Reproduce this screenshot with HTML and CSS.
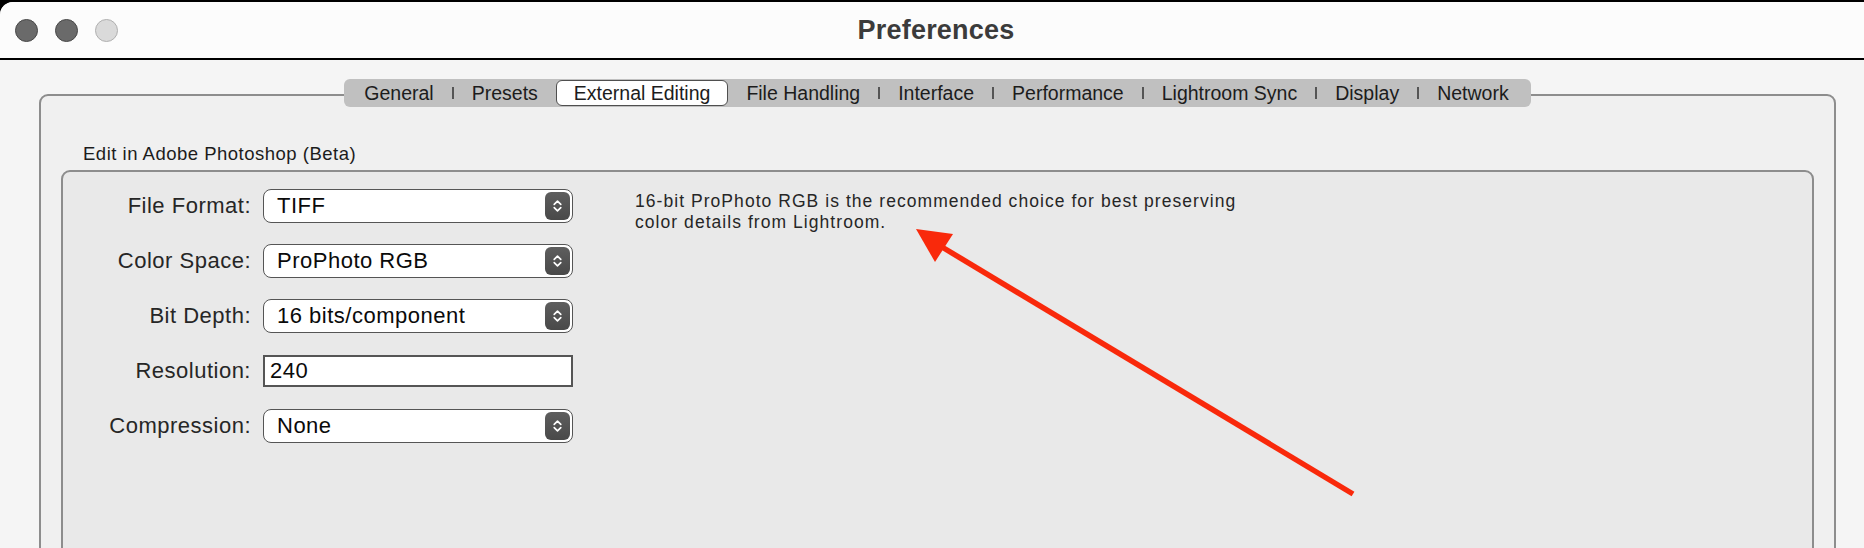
FILE: index.html
```html
<!DOCTYPE html>
<html>
<head>
<meta charset="utf-8">
<title>Preferences</title>
<link rel="stylesheet" href="styles.css">
</head>
<body>
<div class="window">
  <div class="titlebar">
    <div class="lights">
      <span class="light dark"></span>
      <span class="light dark"></span>
      <span class="light off"></span>
    </div>
    <div class="title">Preferences</div>
    <div class="spacer"></div>
  </div>
  <div class="content">
    <div class="panel">
      <div class="tabs">
        <span class="tab">General</span><span class="sep"></span>
        <span class="tab">Presets</span>
        <span class="tab active">External Editing</span>
        <span class="tab">File Handling</span><span class="sep"></span>
        <span class="tab">Interface</span><span class="sep"></span>
        <span class="tab">Performance</span><span class="sep"></span>
        <span class="tab">Lightroom Sync</span><span class="sep"></span>
        <span class="tab">Display</span><span class="sep"></span>
        <span class="tab">Network</span>
      </div>
      <div class="group-label">Edit in Adobe Photoshop (Beta)</div>
      <div class="group">
        <div class="form">
          <label class="lbl">File Format:</label>
          <div class="select"><span class="val">TIFF</span><span class="stepper"><svg viewBox="0 0 10 14" width="11" height="16"><path d="M2 5.5 L5 2.5 L8 5.5 M2 8.5 L5 11.5 L8 8.5" fill="none" stroke="#fff" stroke-width="1.5" stroke-linecap="round" stroke-linejoin="round"/></svg></span></div>
          <label class="lbl">Color Space:</label>
          <div class="select"><span class="val">ProPhoto RGB</span><span class="stepper"><svg viewBox="0 0 10 14" width="11" height="16"><path d="M2 5.5 L5 2.5 L8 5.5 M2 8.5 L5 11.5 L8 8.5" fill="none" stroke="#fff" stroke-width="1.5" stroke-linecap="round" stroke-linejoin="round"/></svg></span></div>
          <label class="lbl">Bit Depth:</label>
          <div class="select"><span class="val">16 bits/component</span><span class="stepper"><svg viewBox="0 0 10 14" width="11" height="16"><path d="M2 5.5 L5 2.5 L8 5.5 M2 8.5 L5 11.5 L8 8.5" fill="none" stroke="#fff" stroke-width="1.5" stroke-linecap="round" stroke-linejoin="round"/></svg></span></div>
          <label class="lbl">Resolution:</label>
          <div class="input">240</div>
          <label class="lbl">Compression:</label>
          <div class="select"><span class="val">None</span><span class="stepper"><svg viewBox="0 0 10 14" width="11" height="16"><path d="M2 5.5 L5 2.5 L8 5.5 M2 8.5 L5 11.5 L8 8.5" fill="none" stroke="#fff" stroke-width="1.5" stroke-linecap="round" stroke-linejoin="round"/></svg></span></div>
        </div>
        <p class="desc">16-bit ProPhoto RGB is the recommended choice for best preserving<br>color details from Lightroom.</p>
      </div>
    </div>
  </div>
</div>
<svg class="arrow" width="1864" height="548" viewBox="0 0 1864 548">
  <line x1="1353" y1="494" x2="942" y2="247" stroke="#f9290b" stroke-width="5.5"/>
  <polygon points="916,229 935,262 953,234" fill="#f9290b"/>
</svg>
</body>
</html>
```
FILE: styles.css
```css
html, body {
  margin: 0;
  padding: 0;
}
body {
  width: 1864px;
  height: 548px;
  overflow: hidden;
  background: #000;
  font-family: "Liberation Sans", Arial, sans-serif;
  color: #222;
  position: relative;
}
.window {
  margin-top: 2px;
  height: 546px;
  background: #f5f5f5;
  border-top-left-radius: 13px;
  overflow: hidden;
}
.titlebar {
  height: 56px;
  background: #fcfcfc;
  border-bottom: 2px solid #000;
  display: grid;
  grid-template-columns: 1fr auto 1fr;
  align-items: center;
}
.lights {
  display: flex;
  gap: 17px;
  padding-left: 15px;
}
.light {
  width: 21px;
  height: 21px;
  border-radius: 50%;
  display: block;
}
.light.dark {
  background: #6a6a6a;
  border: 1px solid #484848;
}
.light.off {
  background: #dadada;
  border: 1px solid #b0b0b0;
}
.title {
  font-size: 27px;
  font-weight: bold;
  color: #3b3b3b;
  padding-left: 8px;
  letter-spacing: 0.2px;
}
.content {
  padding: 34px 28px 0 39px;
}
.panel {
  background: #f0f0f0;
  border: 2px solid #8d8d8d;
  border-radius: 9px;
  height: 600px;
  display: flex;
  flex-direction: column;
  padding: 0 20px;
}
.tabs {
  align-self: center;
  margin-top: -17px;
  height: 28px;
  background: #c0c0c0;
  border-radius: 6px;
  display: flex;
  align-items: center;
  padding: 0 4px 0 2px;
}
.tab {
  font-size: 19.5px;
  padding: 0 18px;
  color: #1c1c1c;
  line-height: 24px;
}
.tab.active {
  background: #fff;
  border: 1.5px solid #4f4f4f;
  border-radius: 6px;
  padding: 0 17px;
  height: 24px;
}
.sep {
  width: 2px;
  height: 12px;
  background: #555;
}
.group-label {
  font-size: 18.5px;
  margin: 36px 0 0 22px;
  line-height: 22px;
  color: #1c1c1c;
  letter-spacing: 0.5px;
}
.group {
  margin-top: 5px;
  background: #e9e9e9;
  border: 2px solid #8d8d8d;
  border-radius: 9px;
  flex: 1;
  display: flex;
  align-items: flex-start;
  padding-top: 6px;
}
.form {
  display: grid;
  grid-template-columns: 188px 310px;
  grid-auto-rows: 55px;
  column-gap: 12px;
  align-items: center;
}
.lbl {
  text-align: right;
  font-size: 22px;
  color: #262626;
  letter-spacing: 0.5px;
}
.select {
  height: 32px;
  background: #fff;
  border: 1.5px solid #555;
  border-radius: 8px;
  display: flex;
  align-items: center;
  justify-content: space-between;
  padding: 0 2px 0 13px;
}
.val {
  font-size: 22px;
  color: #0a0a0a;
  letter-spacing: 0.5px;
}
.stepper {
  width: 25px;
  height: 28px;
  border-radius: 6px;
  background: linear-gradient(#5e5e5e, #494949);
  display: flex;
  align-items: center;
  justify-content: center;
}
.input {
  height: 28px;
  background: #fff;
  border: 2px solid #555;
  font-size: 22px;
  color: #0a0a0a;
  line-height: 28px;
  padding-left: 5px;
  letter-spacing: 0.5px;
}
.desc {
  margin: 13px 0 0 62px;
  font-size: 17.5px;
  line-height: 21px;
  color: #262626;
  letter-spacing: 1.05px;
}
.arrow {
  position: absolute;
  top: 0;
  left: 0;
  pointer-events: none;
}
```
